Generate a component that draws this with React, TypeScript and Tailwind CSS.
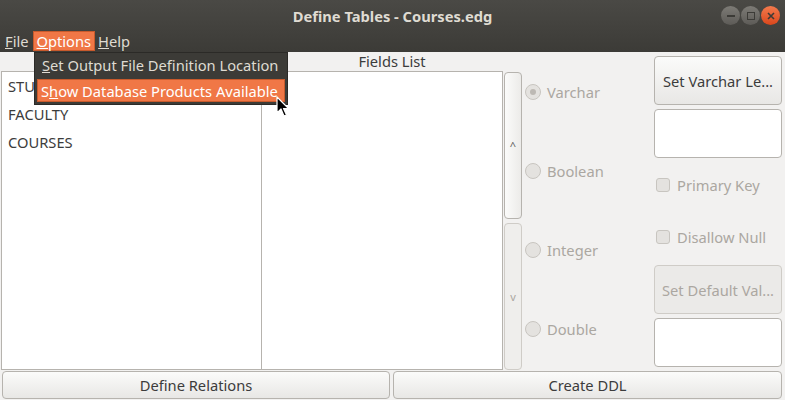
import React from 'react';

const font = { fontFamily: '"Noto Sans", "Open Sans", sans-serif' };

function Radio({ label, checked, top }: { label: string; checked?: boolean; top: string }) {
  return (
    <div className={`flex items-center gap-[6px] h-[20px] ${top}`}>
      <div className="w-[16px] h-[16px] rounded-full border border-[#c8c5c0] bg-[#e4e2df] flex items-center justify-center">
        {checked && <div className="w-[6px] h-[6px] rounded-full bg-[#bdb9b4]" />}
      </div>
      <span className="text-[#aba7a1]">{label}</span>
    </div>
  );
}

function Check({ label }: { label: string }) {
  return (
    <div className="flex items-center gap-[7px] pl-[2px] h-[20px]">
      <div className="w-[14px] h-[14px] rounded-[3px] border border-[#c8c5c0] bg-[#e4e2df]" />
      <span className="text-[#aba7a1]">{label}</span>
    </div>
  );
}

function Cursor() {
  return (
    <svg className="absolute left-[276px] top-[96px]" width="14" height="22" viewBox="0 0 14 22">
      <path d="M1 1 L1 17 L5 13 L8 20 L10.5 19 L7.5 12.5 L12.5 12.5 Z" fill="#000" stroke="#fff" strokeWidth="1.2" strokeLinejoin="round" />
    </svg>
  );
}

export default function App() {
  return (
    <div className="relative w-[785px] h-[400px] bg-[#f2f1f0] overflow-hidden text-[14.7px] leading-[20px] text-[#3c3c3c]" style={font}>
      {/* title bar + menu */}
      <div className="bg-gradient-to-b from-[#4a4945] to-[#3c3b37]">
        <div className="h-[31px] flex items-center relative">
          <div className="flex-1 text-center font-bold text-[#dfdbd2]">Define Tables - Courses.edg</div>
          <div className="absolute right-[5px] top-[6px] flex gap-[1px]">
            <div className="w-[19px] h-[19px] rounded-full bg-gradient-to-b from-[#7d7b76] to-[#5d5b57] flex items-center justify-center">
              <div className="w-[8px] h-[2px] bg-[#3c3b37]" />
            </div>
            <div className="w-[19px] h-[19px] rounded-full bg-gradient-to-b from-[#7d7b76] to-[#5d5b57] flex items-center justify-center">
              <div className="w-[8px] h-[8px] border-[1.5px] border-[#3c3b37]" />
            </div>
            <div className="w-[19px] h-[19px] rounded-full bg-gradient-to-b from-[#f47a4c] to-[#d9461a] flex items-center justify-center">
              <svg width="8" height="8" viewBox="0 0 8 8"><path d="M1 1 L7 7 M7 1 L1 7" stroke="#3c3b37" strokeWidth="1.6" /></svg>
            </div>
          </div>
        </div>
        <div className="h-[21px] flex items-start text-[#dfdbd2]">
          <span className="pl-[5px] pr-[4px] h-[20px] flex items-center"><u>F</u>ile</span>
          <span className="px-[3px] h-[20px] flex items-center bg-[#f07746] border border-[#c85a2c] text-white"><u>O</u>ptions</span>
          <span className="px-[3px] h-[20px] flex items-center"><u>H</u>elp</span>
        </div>
      </div>

      {/* main layout */}
      <div className="flex h-[319px] pl-[1px]">
        <div className="flex flex-col w-[502px] shrink-0">
          <div className="flex h-[19px]">
            <div className="w-[261px] shrink-0" />
            <div className="w-[260px] shrink-0 text-center leading-[19px]">Fields List</div>
          </div>
          <div className="flex h-[299px]">
            <div className="w-[261px] bg-white border border-[#b6b3ae] pl-[6px]">
              <div className="h-[28px] flex items-center pb-[1px]">STUDENTS</div>
              <div className="h-[28px] flex items-center pb-[1px]">FACULTY</div>
              <div className="h-[28px] flex items-center pb-[1px]">COURSES</div>
            </div>
            <div className="flex-1 bg-white border border-[#b6b3ae] border-l-0" />
          </div>
        </div>
        <div className="flex flex-col gap-[4px] w-[18px] ml-[1px] pt-[20px] pb-[1px]">
          <div className="flex-1 rounded-[4px] border border-[#b6b3ae] bg-gradient-to-r from-[#fbfbfa] to-[#ecebe9] flex items-center justify-center text-[11px] text-[#5a5a5a]">^</div>
          <div className="flex-1 rounded-[4px] border border-[#cfccc7] bg-[#efeeec] flex items-center justify-center text-[11px] text-[#aba7a1]">v</div>
        </div>
        <div className="w-[132px] flex flex-col pl-[3px] pt-[30px]">
          <Radio label="Varchar" checked top="" />
          <Radio label="Boolean" top="mt-[59px]" />
          <Radio label="Integer" top="mt-[59px]" />
          <Radio label="Double" top="mt-[59px]" />
        </div>
        <div className="w-[128px] flex flex-col pt-[4px]">
          <button className="h-[49px] rounded-[4px] border border-[#b6b3ae] bg-gradient-to-b from-[#fbfbfa] to-[#e8e7e5] text-[#3c3c3c]">Set Varchar Le...</button>
          <div className="h-[49px] mt-[4px] rounded-[4px] border border-[#b6b3ae] bg-white" />
          <div className="mt-[17px]"><Check label="Primary Key" /></div>
          <div className="mt-[32px]"><Check label="Disallow Null" /></div>
          <button className="mt-[18px] h-[49px] rounded-[4px] border border-[#cfccc7] bg-[#ebeae8] text-[#aba7a1]">Set Default Val...</button>
          <div className="h-[49px] mt-[4px] rounded-[4px] border border-[#b6b3ae] bg-white" />
        </div>
      </div>

      {/* bottom buttons */}
      <div className="flex gap-[3px] pl-[2px] h-[28px]">
        <button className="w-[388px] rounded-[4px] border border-[#b6b3ae] bg-gradient-to-b from-[#fbfbfa] to-[#e8e7e5]">Define Relations</button>
        <button className="w-[389px] rounded-[4px] border border-[#b6b3ae] bg-gradient-to-b from-[#fbfbfa] to-[#e8e7e5]">Create DDL</button>
      </div>

      {/* dropdown menu */}
      <div className="absolute left-[34px] top-[52px] w-[254px] h-[53px] bg-[#3c3b37] border border-[#2b2a27] px-[2px] pt-[1px] text-[#dfdbd2]">
        <div className="h-[25px] flex items-center px-[5px] pb-[3px]"><u>S</u>et Output File Definition Location</div>
        <div className="h-[23px] flex items-center px-[3px] bg-[#f07746] border border-[#c85a2c] text-white">S<u>h</u>ow Database Products Available</div>
      </div>
      <Cursor />
    </div>
  );
}
